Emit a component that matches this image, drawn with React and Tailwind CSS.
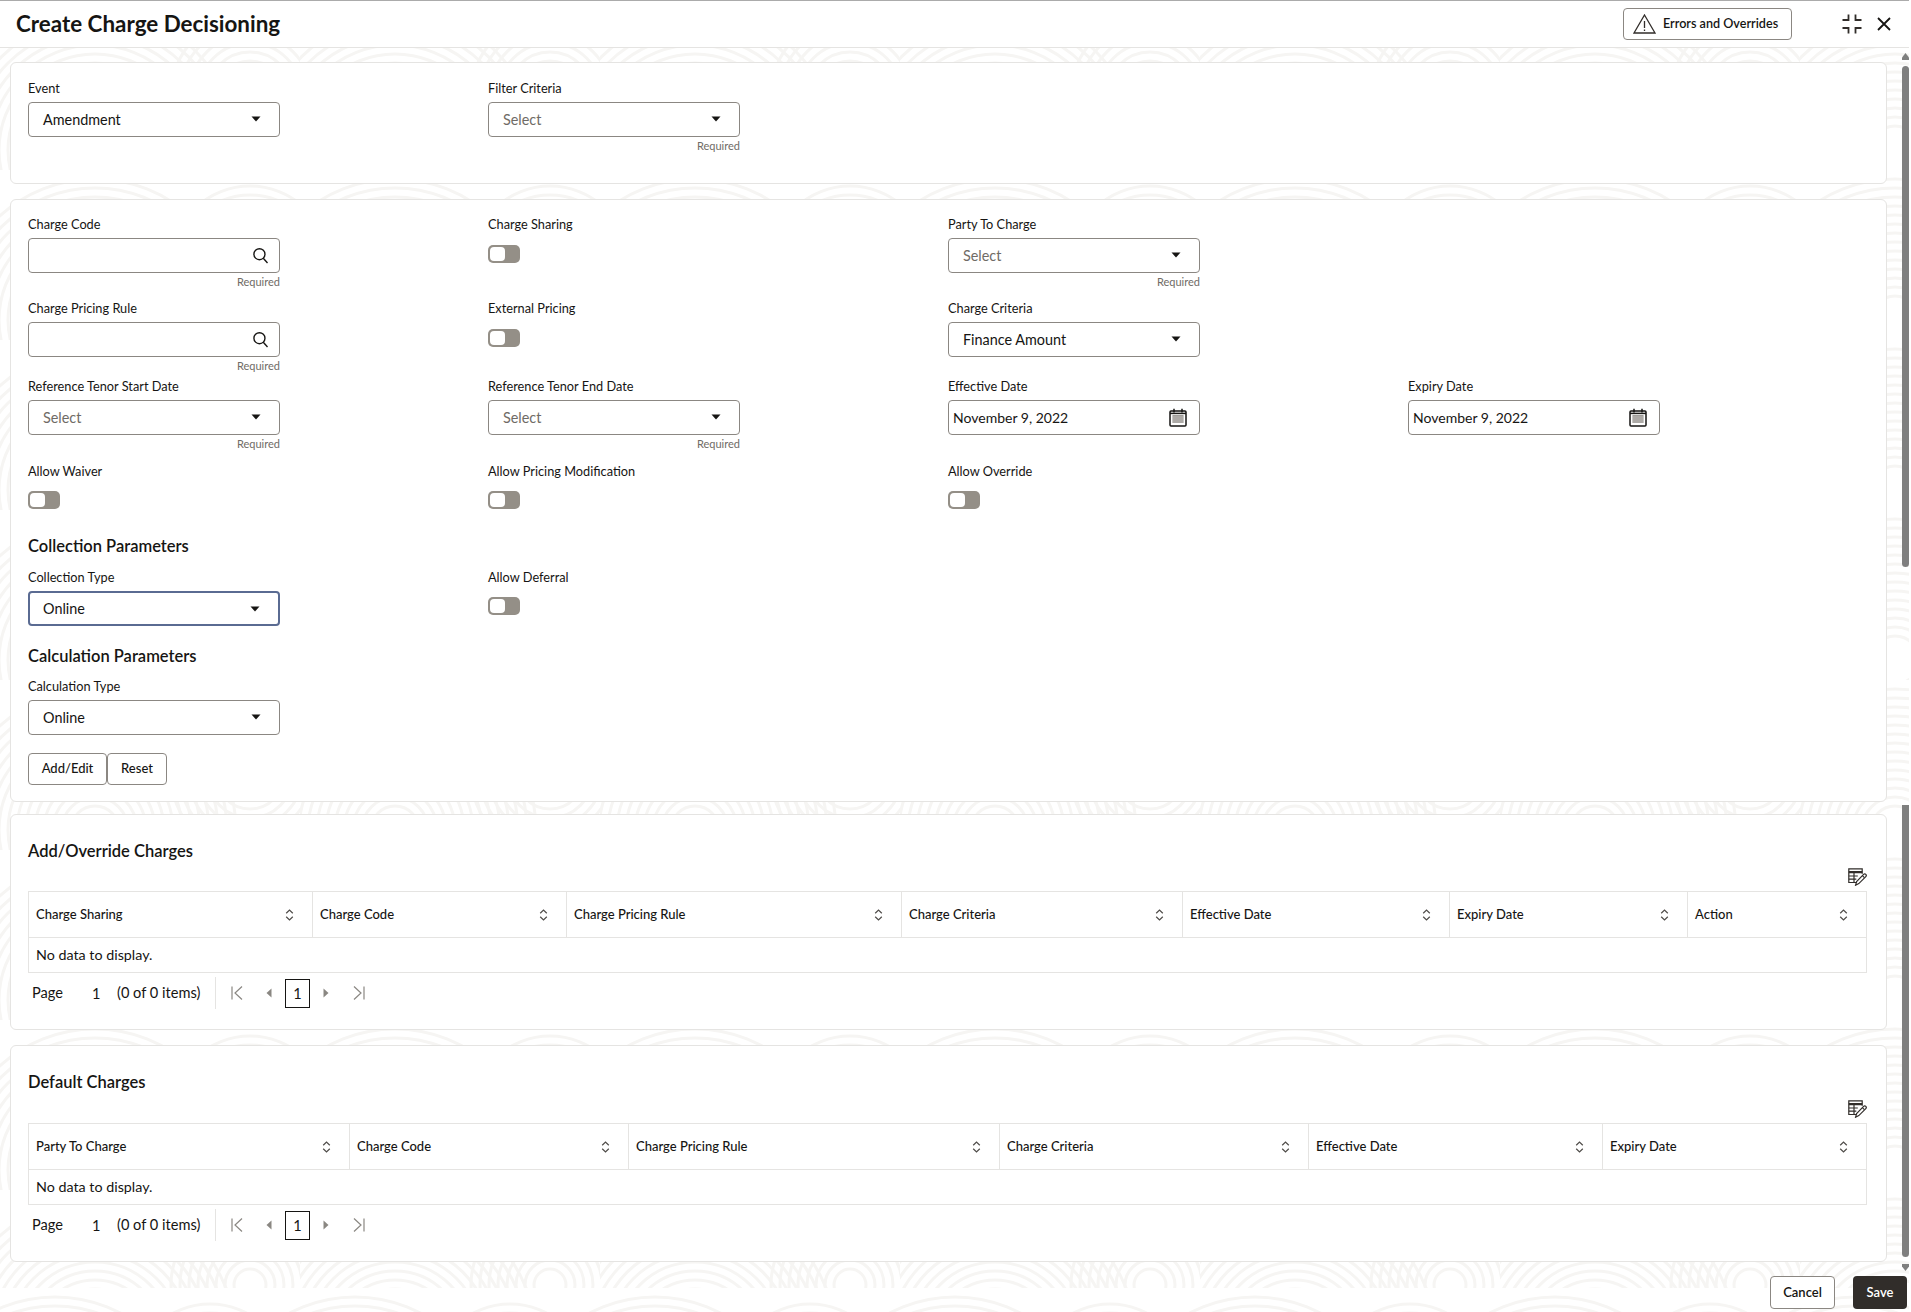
const ringSets = [
  { cx: 95, cy: 150, from: 24, to: 150 },
  { cx: 250, cy: 95, from: 16, to: 96 },
];

function WavePattern() {
  const rings = (
    <g fill="none" stroke="#f6f5f3" strokeWidth="3">
      {ringSets.map((set) =>
        Array.from({ length: Math.floor((set.to - set.from) / 9) }, (_, i) => (
          <circle key={`${set.cx}-${i}`} cx={set.cx} cy={set.cy} r={set.from + i * 9} />
        ))
      )}
    </g>
  );
  return (
    <svg className="absolute left-0 top-0 h-[1312px] w-[1909px]" aria-hidden="true">
      <defs>
        <pattern id="wave" width="300" height="170" patternUnits="userSpaceOnUse">
          {rings}
        </pattern>
        <pattern id="waveFoot" x="-40" y="1288" width="300" height="170" patternUnits="userSpaceOnUse">
          {rings}
        </pattern>
      </defs>
      <rect x="0" y="48" width="1909" height="1240" fill="url(#wave)" />
      <rect x="0" y="1288" width="1909" height="24" fill="url(#waveFoot)" />
    </svg>
  );
}

function Caret() {
  return (
    <svg width="10" height="6" viewBox="0 0 10 6" className="absolute right-[18px] top-[13px]">
      <path d="M0.5 0.5h9L5 5.5z" fill="#161513" />
    </svg>
  );
}

function SearchIcon() {
  return (
    <svg width="17" height="17" viewBox="0 0 16 16" className="absolute right-[10px] top-[8px]" fill="none" stroke="#161513" strokeWidth="1.3">
      <circle cx="7" cy="6.8" r="5.2" />
      <path d="M10.6 10.6 14.6 15" />
    </svg>
  );
}

function CalendarIcon() {
  return (
    <svg width="18" height="19" viewBox="0 0 18 19" className="absolute right-[12px] top-[7px]" fill="none">
      <rect x="1" y="3" width="16" height="15" rx="1" stroke="#161513" strokeWidth="1.5" />
      <path d="M1 5.4h16" stroke="#161513" strokeWidth="1.5" />
      <path d="M5 0.8v3.6M13 0.8v3.6" stroke="#161513" strokeWidth="1.5" />
      <path d="M3.5 8h11M3.5 10h11M3.5 12h11M3.5 14h11" stroke="#6f6b66" strokeWidth="1.3" />
      <path d="M5 7.5v7.5M7 7.5v7.5M9 7.5v7.5M11 7.5v7.5M13 7.5v7.5" stroke="#fff" strokeWidth="0.5" />
    </svg>
  );
}

function Label({ children }) {
  return <div className="h-[18px] text-[12.75px] leading-[18px] text-[#161513]">{children}</div>;
}

function Required() {
  return <div className="mt-[2px] h-[14px] text-right text-[11px] leading-[14px] text-[#6f6b66]">Required</div>;
}

function Select({ label, value, placeholder, required, focused }) {
  return (
    <div className="w-[252px]">
      <Label>{label}</Label>
      <div
        className={
          focused
            ? "relative mt-[5px] flex h-[35px] items-center rounded-[4px] border-2 border-[#5a6b92] pl-[13px] text-[14.4px]"
            : "relative mt-[5px] flex h-[35px] items-center rounded-[4px] border border-[#8b8782] pl-[14px] text-[14.4px]"
        }
      >
        {placeholder ? <span className="text-[#6f6b66]">{placeholder}</span> : <span className="text-[#161513]">{value}</span>}
        <Caret />
      </div>
      {required && <Required />}
    </div>
  );
}

function SearchField({ label }) {
  return (
    <div className="w-[252px]">
      <Label>{label}</Label>
      <div className="relative mt-[5px] h-[35px] rounded-[4px] border border-[#8b8782]">
        <SearchIcon />
      </div>
      <Required />
    </div>
  );
}

function DateField({ label, value }) {
  return (
    <div className="w-[252px]">
      <Label>{label}</Label>
      <div className="relative mt-[5px] flex h-[35px] items-center rounded-[4px] border border-[#8b8782] pl-[4px] text-[14px] text-[#161513]">
        {value}
        <CalendarIcon />
      </div>
    </div>
  );
}

function Toggle({ label, className }) {
  return (
    <div className="w-[252px]">
      <Label>{label}</Label>
      <div className={`${className} flex h-[18px] w-[32px] items-center rounded-[5px] bg-[#948f87] pl-[2px]`}>
        <div className="h-[14px] w-[15px] rounded-[4px] bg-white" />
      </div>
    </div>
  );
}

function Heading({ children }) {
  return <h2 className="h-[24px] text-[16.5px] font-semibold leading-[24px] text-[#161513]">{children}</h2>;
}

function SortIcon() {
  return (
    <svg width="9" height="12" viewBox="0 0 9 12" className="shrink-0" fill="none" stroke="#4f4c49" strokeWidth="1.2">
      <path d="M1.2 4.2 4.5 1l3.3 3.2M1.2 7.8 4.5 11l3.3-3.2" />
    </svg>
  );
}

function TableEditIcon() {
  return (
    <svg width="19" height="18" viewBox="0 0 19 18" fill="none" stroke="#312d2a" strokeWidth="1.2">
      <path d="M8.5 14.5H0.8V0.8h13.4v5" />
      <path d="M0.8 3.6h13.4M0.8 4.6h13.4M0.8 8h9M0.8 11.2h7.5M6 4.6v9.9" />
      <path d="M7.6 17.2l1-3.6 7-7.2a1.3 1.3 0 0 1 2.2 2.2l-7 7z" />
      <path d="M14.4 7.6l2 2" />
    </svg>
  );
}

function Pagination() {
  return (
    <div className="mt-[4px] flex h-[32px] items-center pl-[4px] text-[14.6px] text-[#161513]">
      <span className="w-[60px]">Page</span>
      <span className="w-[25px] pt-[2px]">1</span>
      <span className="w-[83px] whitespace-nowrap">(0 of 0 items)</span>
      <div className="ml-[15px] h-full w-px bg-[#e5e4e2]" />
      <svg width="12" height="14" viewBox="0 0 12 14" className="ml-[15px]" fill="none" stroke="#8a8782" strokeWidth="1.2">
        <path d="M1 0.5v13M11 0.5 4 7l7 6.5" />
      </svg>
      <svg width="6" height="10" viewBox="0 0 6 10" className="ml-[23px]">
        <path d="M5.5 0.5v9L0.5 5z" fill="#8a8782" />
      </svg>
      <div className="ml-[13px] flex h-[29px] w-[25px] items-center justify-center border border-[#161513] pt-[2px]">1</div>
      <svg width="6" height="10" viewBox="0 0 6 10" className="ml-[13px]">
        <path d="M0.5 0.5v9L5.5 5z" fill="#8a8782" />
      </svg>
      <svg width="12" height="14" viewBox="0 0 12 14" className="ml-[24px]" fill="none" stroke="#8a8782" strokeWidth="1.2">
        <path d="M11 0.5v13M1 0.5 8 7l-7 6.5" />
      </svg>
    </div>
  );
}

function ChargeTable({ columns }) {
  return (
    <table className="w-[1838px] table-fixed border-collapse border border-[#e5e4e2] text-[13px] text-[#161513]">
      <thead>
        <tr className="h-[46px] border-b border-[#e5e4e2]">
          {columns.map((col) => (
            <th key={col.name} className={`${col.width} border-r border-[#e5e4e2] p-0 text-left font-medium`}>
              <div className="flex items-center justify-between pl-[7px] pr-[18px]">
                {col.name}
                <SortIcon />
              </div>
            </th>
          ))}
        </tr>
      </thead>
      <tbody>
        <tr className="h-[35px]">
          <td colSpan={columns.length} className="pl-[7px] text-[14.3px]">
            No data to display.
          </td>
        </tr>
      </tbody>
    </table>
  );
}

function TableCard({ title, columns, className, iconGap }) {
  return (
    <section className={`${className} rounded-[6px] border border-[#e5e4e2] bg-white px-[17px] pt-[23px]`}>
      <div className="pt-[1px]">
        <Heading>{title}</Heading>
      </div>
      <div className={`${iconGap} flex h-[18px] justify-end pr-[2px]`}>
        <TableEditIcon />
      </div>
      <div className="mt-[5px]">
        <ChargeTable columns={columns} />
      </div>
      <Pagination />
    </section>
  );
}

const addColumns = [
  { name: "Charge Sharing", width: "w-[284px]" },
  { name: "Charge Code", width: "w-[254px]" },
  { name: "Charge Pricing Rule", width: "w-[335px]" },
  { name: "Charge Criteria", width: "w-[281px]" },
  { name: "Effective Date", width: "w-[267px]" },
  { name: "Expiry Date", width: "w-[238px]" },
  { name: "Action", width: "w-[179px]" },
];

const defaultColumns = [
  { name: "Party To Charge", width: "w-[321px]" },
  { name: "Charge Code", width: "w-[279px]" },
  { name: "Charge Pricing Rule", width: "w-[371px]" },
  { name: "Charge Criteria", width: "w-[309px]" },
  { name: "Effective Date", width: "w-[294px]" },
  { name: "Expiry Date", width: "w-[264px]" },
];

function Scrollbar() {
  return (
    <>
      <svg width="7" height="7" viewBox="0 0 7 7" className="absolute left-[1902px] top-[53px]">
        <path d="M0 7V4.5L3.5 0 7 4.5V7z" fill="#7f7f7f" />
      </svg>
      <div className="absolute left-[1902px] top-[66px] h-[501px] w-[7px] rounded-full bg-[#7f7f7f]" />
      <div className="absolute left-[1902px] top-[805px] h-[452px] w-[7px] rounded-b-full bg-[#7f7f7f]" />
      <svg width="7" height="7" viewBox="0 0 7 7" className="absolute left-[1902px] top-[1264px]">
        <path d="M0 0v2.5L3.5 7 7 2.5V0z" fill="#7f7f7f" />
      </svg>
    </>
  );
}

export default function App() {
  return (
    <div className="relative h-[1312px] w-full overflow-hidden bg-white font-[Lato,sans-serif]">
      <WavePattern />
      <Scrollbar />

      <header className="relative mr-[2px] flex h-[48px] items-center border-t border-b border-t-[#ababab] border-b-[#e5e4e2] bg-white pl-[16px]">
        <h1 className="text-[22.4px] font-bold text-[#161513]">Create Charge Decisioning</h1>
        <button className="ml-auto flex h-[32px] w-[169px] items-center rounded-[4px] border border-[#8b8782] pl-[9px] text-[12.6px] font-semibold text-[#161513]">
          <svg width="23" height="20" viewBox="0 0 23 20" fill="none" stroke="#312d2a" strokeWidth="1.3">
            <path d="M11.5 1 22 19H1z" />
            <path d="M11.5 7v7M11.5 15.5v1.5" />
          </svg>
          <span className="ml-[7px] pt-[1px]">Errors and Overrides</span>
        </button>
        <svg width="20" height="20" viewBox="0 0 20 20" className="ml-[50px]" fill="none" stroke="#312d2a" strokeWidth="1.8">
          <path d="M6.5 0.5v5.5H0.5M13.5 0.5v5.5H19.5M0.5 14h6v5.5M19.5 14h-6v5.5" />
        </svg>
        <svg width="14" height="14" viewBox="0 0 14 14" className="ml-[15px] mr-[18px]" fill="none" stroke="#161513" strokeWidth="1.8">
          <path d="M1 1l12 12M13 1 1 13" />
        </svg>
      </header>

      <main className="relative pl-[10px] pr-[24px] pt-[14px]">
        <section className="flex h-[122px] gap-[208px] rounded-[6px] border border-[#e5e4e2] bg-white px-[17px] pt-[16px]">
          <Select label="Event" value="Amendment" />
          <Select label="Filter Criteria" placeholder="Select" required />
        </section>

        <section className="mt-[15px] rounded-[6px] border border-[#e5e4e2] bg-white px-[17px] pb-[16px] pt-[15px]">
          <div className="grid h-[84px] grid-cols-[460px_460px_460px_460px]">
            <SearchField label="Charge Code" />
            <Toggle label="Charge Sharing" className="mt-[12px]" />
            <Select label="Party To Charge" placeholder="Select" required />
          </div>
          <div className="grid h-[78px] grid-cols-[460px_460px_460px_460px]">
            <SearchField label="Charge Pricing Rule" />
            <Toggle label="External Pricing" className="mt-[12px]" />
            <Select label="Charge Criteria" value="Finance Amount" />
          </div>
          <div className="grid h-[85px] grid-cols-[460px_460px_460px_460px]">
            <Select label="Reference Tenor Start Date" placeholder="Select" required />
            <Select label="Reference Tenor End Date" placeholder="Select" required />
            <DateField label="Effective Date" value="November 9, 2022" />
            <DateField label="Expiry Date" value="November 9, 2022" />
          </div>
          <div className="grid h-[72px] grid-cols-[460px_460px_460px_460px]">
            <Toggle label="Allow Waiver" className="mt-[11px]" />
            <Toggle label="Allow Pricing Modification" className="mt-[11px]" />
            <Toggle label="Allow Override" className="mt-[11px]" />
          </div>
          <Heading>Collection Parameters</Heading>
          <div className="mt-[10px] grid h-[76px] grid-cols-[460px_460px_460px_460px]">
            <Select label="Collection Type" value="Online" focused />
            <Toggle label="Allow Deferral" className="mt-[11px]" />
          </div>
          <Heading>Calculation Parameters</Heading>
          <div className="mt-[9px]">
            <Select label="Calculation Type" value="Online" />
          </div>
          <div className="mt-[18px] flex text-[13px] font-medium text-[#161513]">
            <button className="h-[32px] w-[79px] rounded-[4px] border border-[#8b8782]">Add/Edit</button>
            <button className="h-[32px] w-[60px] rounded-[4px] border border-[#8b8782]">Reset</button>
          </div>
        </section>

        <TableCard title="Add/Override Charges" columns={addColumns} className="mt-[12px] h-[216px]" iconGap="mt-[5px]" />
        <TableCard title="Default Charges" columns={defaultColumns} className="mt-[15px] h-[217px]" iconGap="mt-[6px]" />

        <div className="-mr-[20px] mt-[14px] flex justify-end gap-[18px] text-[13px] font-semibold">
          <button className="h-[33px] w-[65px] rounded-[4px] border border-[#8b8782] bg-white text-[#161513]">Cancel</button>
          <button className="h-[33px] w-[54px] rounded-[4px] bg-[#312d2a] text-white">Save</button>
        </div>
      </main>
    </div>
  );
}
